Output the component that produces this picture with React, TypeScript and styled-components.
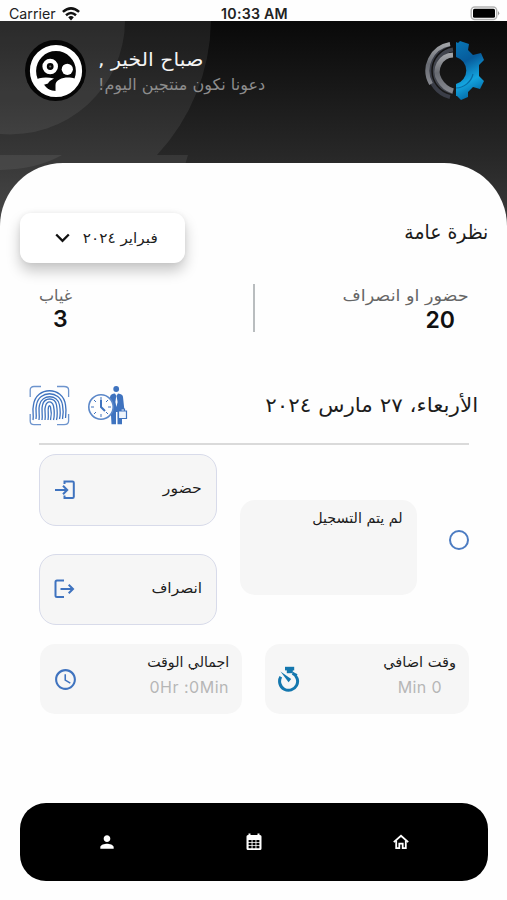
import React from "react";
import styled, { createGlobalStyle } from "styled-components";
import { MdPerson, MdAccessTime } from "react-icons/md";

const Global = createGlobalStyle`
  * { box-sizing: border-box; }
  body { margin: 0; background: #fff; }
`;

const Screen = styled.div`
  width: 507px;
  height: 900px;
  overflow: hidden;
  display: flex;
  flex-direction: column;
  background: #fefefe;
  font-family: Inter, "DejaVu Sans", sans-serif;
`;

const StatusBar = styled.div`
  height: 21px;
  flex: none;
  display: grid;
  grid-template-columns: 1fr auto 1fr;
  align-items: end;
  padding: 0 7px 0 9px;
  color: #222;
  font-size: 14.2px;
  line-height: 15px;
`;
const Carrier = styled.div`
  display: flex;
  align-items: center;
  gap: 6px;
`;
const Clock = styled.div`
  font-weight: 600;
  font-size: 14.2px;
  letter-spacing: 0.25px;
`;
const Battery = styled.svg`
  justify-self: end;
  display: block;
`;

const Header = styled.header`
  position: relative;
  height: 205px;
  flex: none;
`;
const HeaderArt = styled.svg`
  position: absolute;
  inset: 0;
`;
const HeaderContent = styled.div`
  position: relative;
  display: flex;
  padding: 19px 21px 0 25px;
`;
const Greeting = styled.div`
  flex: 1;
  display: flex;
  flex-direction: column;
  align-items: flex-start;
  padding: 6px 0 0 12px;
`;

const Text = styled.span<{ $size: number; $color?: string; $line?: number; $stretch?: number; $weight?: number }>`
  display: block;
  direction: rtl;
  white-space: nowrap;
  font-family: "DejaVu Sans", sans-serif;
  font-size: ${(p) => p.$size}px;
  line-height: ${(p) => p.$line ?? 24}px;
  font-weight: ${(p) => p.$weight ?? 400};
  color: ${(p) => p.$color ?? "#1c1c1c"};
  transform: scaleX(${(p) => p.$stretch ?? 1});
  transform-origin: right;
`;
const GreetingText = styled(Text)`
  transform-origin: left;
`;
const Latin = styled.span<{ $size: number; $color: string; $weight?: number; $spacing?: number }>`
  display: block;
  font-size: ${(p) => p.$size}px;
  line-height: 24px;
  font-weight: ${(p) => p.$weight ?? 400};
  letter-spacing: ${(p) => p.$spacing ?? 0}px;
  color: ${(p) => p.$color};
  white-space: nowrap;
`;

const Sheet = styled.main`
  position: relative;
  margin-top: -63px;
  flex: 1;
  background: #fefefe;
  border-radius: 63px 63px 0 0;
  display: flex;
  flex-direction: column;
`;
const Overview = styled.div`
  display: flex;
  justify-content: space-between;
  padding: 50px 19px 0 20px;
`;
const MonthPicker = styled.div`
  width: 165px;
  height: 50px;
  display: flex;
  align-items: center;
  justify-content: space-between;
  padding: 0 27px 0 35px;
  border-radius: 11px;
  background: #fff;
  box-shadow: 0 8px 14px rgba(0, 0, 0, 0.22), 0 0 5px rgba(0, 0, 0, 0.06);
`;
const OverviewTitle = styled.div`
  padding-top: 7px;
`;
const Stats = styled.div`
  height: 48px;
  margin-top: 21px;
  padding: 0 38px 0 39px;
  display: grid;
  grid-template-columns: 1fr 2.5px 1fr;
`;
const Divider = styled.div`
  background: #b9bdbf;
`;
const Stat = styled.div<{ $end?: boolean }>`
  display: flex;
  flex-direction: column;
  align-items: ${(p) => (p.$end ? "flex-end" : "flex-start")};
`;
const StatValue = styled.div<{ $end?: boolean }>`
  padding: ${(p) => (p.$end ? "0 14px 0 0" : "0 0 0 14px")};
`;

const DateRow = styled.div`
  display: flex;
  align-items: center;
  justify-content: space-between;
  height: 50px;
  margin-top: 48px;
  padding: 0 29px;
`;
const DateIcons = styled.div`
  display: flex;
  align-items: center;
  gap: 18px;
`;
const Rule = styled.div`
  height: 2px;
  margin: 13px 38px 0 39px;
  background: #dadada;
`;
const Attendance = styled.div`
  display: flex;
  align-items: center;
  margin: 9px 38px 0 39px;
`;
const Actions = styled.div`
  display: flex;
  flex-direction: column;
  gap: 28px;
`;
const ActionButton = styled.button`
  width: 178px;
  height: 71.5px;
  display: flex;
  align-items: center;
  justify-content: space-between;
  padding: 0 14px 0 14px;
  border: 1px solid #d8dbea;
  border-radius: 17px;
  background: #f6f6f6;
`;
const ActionLabel = styled.span`
  padding-bottom: 3px;
`;
const Notice = styled.div`
  width: 177px;
  height: 95px;
  margin: 15px 0 0 23px;
  padding: 6px 14px;
  display: flex;
  justify-content: flex-end;
  border-radius: 15px;
  background: #f6f6f6;
`;
const Marker = styled.div`
  width: 20px;
  height: 20px;
  margin-left: auto;
  border: 2px solid #4c7cc2;
  border-radius: 50%;
`;
const Totals = styled.div`
  display: grid;
  grid-template-columns: 202px 204px;
  gap: 23px;
  margin: 19px 0 0 40px;
`;
const TotalCard = styled.div`
  height: 70px;
  display: flex;
  align-items: center;
  justify-content: space-between;
  padding: 0 13px 0 13px;
  border-radius: 15px;
  background: #f6f6f6;
`;
const TotalBody = styled.div<{ $inset?: number }>`
  display: flex;
  flex-direction: column;
  align-items: flex-end;
  gap: 1px;
  padding-bottom: 9px;
  & > :last-child { margin-right: ${(p) => p.$inset ?? 0}px; }
`;
const NavBar = styled.nav`
  margin: auto 19.5px 19px 20px;
  height: 78px;
  flex: none;
  display: grid;
  grid-template-columns: 174px 120px 173px;
  align-items: center;
  justify-items: center;
  border-radius: 26px;
  background: #000;
  color: #fff;
`;
const NavItem = styled.div`
  display: flex;
`;

const blue = "#3f73bf";

const Avatar = () => (
  <svg width="61" height="61" viewBox="0 0 61 61">
    <circle cx="30.5" cy="30.5" r="30.5" fill="#050505" />
    <circle cx="31" cy="31" r="23" fill="none" stroke="#fff" strokeWidth="6.2" />
    <circle cx="25.2" cy="26.5" r="5.6" fill="none" stroke="#fff" strokeWidth="4.4" />
    <circle cx="25.2" cy="26.5" r="1.1" fill="#666" />
    <circle cx="42.3" cy="29.3" r="5.6" fill="#fff" />
    <path d="M9 41 C14 37 22 37 29 38.5 C26 40 24 41.5 23 43.5 L15 46Z" fill="#fff" />
    <path d="M14 43 L19 44.5 C21 48 26 51.5 30.5 52.5 V45 C30.5 40 37 37.5 43 37.5 C48 37.5 52 39 53 41 C49 51 38 57 29 55 C23 54 17 50 14 43Z" fill="#fff" />
  </svg>
);

const Logo = () => (
  <svg width="62" height="62" viewBox="0 0 62 62">
    <defs>
      <linearGradient id="gear" x1="0" y1="0" x2="0.25" y2="1">
        <stop offset="0" stopColor="#0876b5" />
        <stop offset="0.4" stopColor="#075b9b" />
        <stop offset="0.75" stopColor="#13a4df" />
        <stop offset="1" stopColor="#0570ad" />
      </linearGradient>
      <linearGradient id="steel" x1="0" y1="0" x2="0" y2="1">
        <stop offset="0" stopColor="#a1a3a7" />
        <stop offset="0.5" stopColor="#686b72" />
        <stop offset="1" stopColor="#85878e" />
      </linearGradient>
    </defs>
    <path d="M26 4.5 A27 27 0 0 0 26 57" fill="none" stroke="#3a3d47" strokeWidth="4" />
    <path d="M26 4 A27 27 0 0 0 7 44" fill="none" stroke="url(#steel)" strokeWidth="4" />
    <path d="M29 9.5 A21.5 21.5 0 0 0 29 52" fill="none" stroke="#41444d" strokeWidth="4" />
    <path d="M29 15 A16.5 16.5 0 0 0 15.5 40 Q20 48 29 51" fill="none" stroke="url(#steel)" strokeWidth="5.2" />
    <path d="M32 2 L34 3 L36 1 L45 4 L44 10 L49 15 L57 13 L60 20 L55 25 V36 L60 41 L56 49 L49 47 L44 52 V57 L37 60 L33 56 H32 V44 A14 14 0 0 0 32 17Z" fill="url(#gear)" />
    <path d="M32 48 A18 18 0 0 0 49 34" fill="none" stroke="#086ba4" strokeWidth="1.2" />
  </svg>
);

const Fingerprint = () => (
  <svg width="41" height="41" viewBox="0 0 41 41" fill="none" stroke={blue} strokeWidth="1.3">
    <path d="M1.2 12V5Q1.2 1.5 5 1.5H12M28 1.5H35Q39.6 1.5 39.6 5V12M1.2 29V36Q1.2 39.6 5 39.6H12M28 39.6H35Q39.6 39.6 39.6 36V29" stroke="#6d94cd" />
    <path d="M4 35C5 30 3 26 4.5 20C7 1 34 1 36.5 20C37.5 25 37 28 36.5 33M7 34C8 28 6 25 7.5 20C10 5 31 5 33.5 20C34.5 25 34.5 29 33.5 34M10 35C11 29 9 25 10.5 20C13 9 28.5 9 30.5 20C31.5 26 31.5 30 30.5 34M13 35C14 29 12 25 13.5 20C15.5 12 26 12 27.5 20C28.5 26 28.5 31 27.5 35M16 35C17 29 15 25 16.5 21C18 15.5 23 15.5 24.5 21C25.5 26 25.5 31 24.5 35M19 35C20 29 18.5 26 19.5 22Q20.5 19.5 21.5 22C22.5 26 22.5 31 21.5 35" />
  </svg>
);

const Worker = () => (
  <svg width="40" height="41" viewBox="0 0 40 41">
    <circle cx="28.2" cy="4" r="2.9" fill={blue} />
    <path d="M22 12Q22.5 8.5 27 8.5L28.4 11L30 8.5Q35 9 35 12L36.5 26H34V39.3H29.5V27H28V39.3H23.5Z" fill={blue} />
    <path d="M28.4 10L29.6 17L28.4 22L27.4 17Z" fill="#fff" />
    <circle cx="13" cy="22" r="12.2" fill="#fefefe" stroke="#5b87c8" strokeWidth="1.6" />
    <path d="M13 12V15M13 29V32M3 22H6M20 22H23M6 15L8 17M20 15L18 17M6 29L8 27M20 29L18 27" stroke={blue} />
    <path d="M13 15V22L17 26" fill="none" stroke={blue} strokeWidth="2" />
    <path d="M30.5 26H38.5V33.5H30.5ZM33 26V24H36.5V26" fill="#eef4fc" stroke={blue} strokeWidth="1.2" />
  </svg>
);

const Enter = () => (
  <svg width="22" height="20" viewBox="0 0 22 20" fill="none" stroke={blue} strokeWidth="2">
    <path d="M10.5 4V1.5H18.5Q19.8 1.5 19.8 2.8V16.7Q19.8 18 18.5 18H10.5V15.5M1 10H13M9 5.8L13.2 10L9 14.2" />
  </svg>
);
const Leave = () => (
  <svg width="22" height="20" viewBox="0 0 22 20" fill="none" stroke={blue} strokeWidth="2">
    <path d="M10 1.5H3Q1.5 1.5 1.5 3V16.5Q1.5 18 3 18H10M6.5 10H19M14.7 5.8L19 10L14.7 14.2" />
  </svg>
);
const Timer = () => (
  <svg width="23" height="26" viewBox="0 0 23 26" fill="none" stroke="#1477ae">
    <path d="M7 2.6H16.2" strokeWidth="3.6" />
    <path d="M11.8 4V7.2" strokeWidth="6" />
    <path d="M2.8 10.8A9 9 0 1 0 14.5 7.2L18.8 9.5" strokeWidth="3" />
    <path d="M2.5 5.5L13.2 13L10.6 16.2Z" fill="#1477ae" stroke="none" />
  </svg>
);
const Calendar = () => (
  <svg width="16" height="18" viewBox="0 0 16 18">
    <path d="M2 2H2.5V0.5H4.5V2H11.5V0.5H13.5V2H14Q15.5 2 15.5 3.5V15.5Q15.5 17 14 17H2Q.5 17 .5 15.5V3.5Q.5 2 2 2Z" fill="#fff" />
    <path d="M2.6 7H5.6V9.3H2.6ZM6.5 7H9.5V9.3H6.5ZM10.4 7H13.4V9.3H10.4ZM2.6 10.1H5.6V12.3H2.6ZM6.5 10.1H9.5V12.3H6.5ZM10.4 10.1H13.4V12.3H10.4ZM2.6 13.1H5.6V15.2H2.6ZM6.5 13.1H9.5V15.2H6.5ZM10.4 13.1H13.4V15.2H10.4Z" fill="#000" />
  </svg>
);
const Home = () => (
  <svg width="16" height="16" viewBox="0 0 16 16" fill="none" stroke="#fff" strokeWidth="1.8">
    <path d="M0.8 8.2L8 1.8L15.2 8.2" />
    <path d="M3.2 6.5V14.1H6.3V9.6H9.7V14.1H12.8V6.5" />
  </svg>
);

export default function App() {
  return (
    <Screen>
      <Global />
      <StatusBar>
        <Carrier>
          Carrier
          <svg width="18" height="14" viewBox="0 0 18 14" fill="none" stroke="#111" strokeWidth="2.5">
            <path d="M.9 4.9Q9 -2.2 17.1 4.9M4 8.2Q9 3.9 14 8.2" />
            <path d="M6.2 10.2Q9 7.8 11.8 10.2L9 13.5Z" fill="#111" stroke="none" />
          </svg>
        </Carrier>
        <Clock>10:33 AM</Clock>
        <Battery width="30" height="15" viewBox="0 0 30 15">
          <rect x="1.2" y="1" width="25.5" height="12.5" rx="3.5" fill="#fff" stroke="#b4b4b4" strokeWidth="1.5" />
          <rect x="3" y="2.7" width="22" height="9" rx="1.5" fill="#000" />
          <path d="M28 5Q30.5 7.3 28 9.5Z" fill="#999" />
        </Battery>
      </StatusBar>

      <Header>
        <HeaderArt width="507" height="205" viewBox="0 0 507 205">
          <defs>
            <linearGradient id="night" x1="0" y1="0" x2="0" y2="1">
              <stop offset="0" stopColor="#090909" />
              <stop offset="0.65" stopColor="#272727" />
              <stop offset="1" stopColor="#3a3a3a" />
            </linearGradient>
          </defs>
          <rect width="507" height="205" fill="url(#night)" />
          <path d="M0 0H211A201 201 0 0 1 157 134H188L185 144V205H0Z" fill="#fff" opacity="0.075" />
          <path d="M0 0H125A115 114 0 0 1 0 113Z" fill="#fff" opacity="0.07" />
          <path d="M0 134H62Q38 148 0 149Z" fill="#fff" opacity="0.07" />
        </HeaderArt>
        <HeaderContent>
          <Avatar />
          <Greeting>
            <GreetingText $size={19} $color="#f4f4f4" $line={26} $stretch={1.08}>صباح الخير ,</GreetingText>
            <GreetingText $size={16} $color="#8d8d8d" $line={25}>دعونا نكون منتجين اليوم!</GreetingText>
          </Greeting>
          <Logo />
        </HeaderContent>
      </Header>

      <Sheet>
        <Overview>
          <MonthPicker>
            <svg width="15" height="10" viewBox="0 0 15 10" fill="none" stroke="#111" strokeWidth="2.3">
              <path d="M1.2 1.5L7.5 7.8L13.8 1.5" />
            </svg>
            <Text $size={14} $stretch={1.09}>فبراير ٢٠٢٤</Text>
          </MonthPicker>
          <OverviewTitle>
            <Text $size={20} $stretch={0.94}>نظرة عامة</Text>
          </OverviewTitle>
        </Overview>

        <Stats>
          <Stat>
            <Text $size={16} $color="#666" $line={23}>غياب</Text>
            <StatValue><Latin $size={23} $color="#111" $weight={600}>3</Latin></StatValue>
          </Stat>
          <Divider />
          <Stat $end>
            <Text $size={16} $color="#666" $stretch={1.1}>حضور او انصراف</Text>
            <StatValue $end><Latin $size={23} $color="#111" $weight={600}>20</Latin></StatValue>
          </Stat>
        </Stats>

        <DateRow>
          <DateIcons>
            <Fingerprint />
            <Worker />
          </DateIcons>
          <Text $size={20} $stretch={1.075}>الأربعاء، ٢٧ مارس ٢٠٢٤</Text>
        </DateRow>
        <Rule />

        <Attendance>
          <Actions>
            <ActionButton>
              <Enter />
              <ActionLabel><Text $size={14} $stretch={1.12}>حضور</Text></ActionLabel>
            </ActionButton>
            <ActionButton>
              <Leave />
              <ActionLabel><Text $size={14} $stretch={1.1}>انصراف</Text></ActionLabel>
            </ActionButton>
          </Actions>
          <Notice>
            <Text $size={14} $stretch={1.02}>لم يتم التسجيل</Text>
          </Notice>
          <Marker />
        </Attendance>

        <Totals>
          <TotalCard>
            <MdAccessTime size={25} color={blue} />
            <TotalBody>
              <Text $size={14} $stretch={1.01}>اجمالي الوقت</Text>
              <Latin $size={16} $color="#b6b6b6" $spacing={0.5}>0Hr :0Min</Latin>
            </TotalBody>
          </TotalCard>
          <TotalCard>
            <Timer />
            <TotalBody $inset={14}>
              <Text $size={14} $stretch={1.04}>وقت اضافي</Text>
              <Latin $size={16} $color="#b6b6b6" $spacing={0.4}>Min 0</Latin>
            </TotalBody>
          </TotalCard>
        </Totals>

        <NavBar>
          <NavItem><MdPerson size={20} /></NavItem>
          <NavItem><Calendar /></NavItem>
          <NavItem><Home /></NavItem>
        </NavBar>
      </Sheet>
    </Screen>
  );
}
